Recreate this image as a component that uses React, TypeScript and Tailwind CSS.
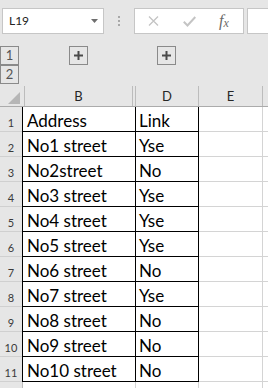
import React from "react";

const rows: [string, string][] = [
  ["Address", "Link"],
  ["No1 street", "Yse"],
  ["No2street", "No"],
  ["No3 street", "Yse"],
  ["No4 street", "Yse"],
  ["No5 street", "Yse"],
  ["No6 street", "No"],
  ["No7 street", "Yse"],
  ["No8 street", "No"],
  ["No9 street", "No"],
  ["No10 street", "No"],
];

const font = { fontFamily: "Lato, 'Liberation Sans', sans-serif" };

function PlusBtn() {
  return (
    <div className="w-[19px] h-[19px] border border-[#8a8a8a] flex items-center justify-center">
      <svg width="9" height="9" viewBox="0 0 9 9">
        <rect x="3.5" y="0" width="2" height="9" fill="#4a4a4a" />
        <rect x="0" y="3.5" width="9" height="2" fill="#4a4a4a" />
      </svg>
    </div>
  );
}

export default function App() {
  return (
    <div className="w-[268px] h-[388px] overflow-hidden bg-[#e6e6e6]" style={font}>
      {/* formula bar */}
      <div className="h-[46px] pt-2 pl-[2px] flex items-start">
        <div className="w-[102px] h-[26px] border border-[#c6c6c6] bg-white flex items-center justify-between pl-[6px] pr-[5px]">
          <span className="text-[12px] text-[#222] leading-none">L19</span>
          <svg width="7" height="4" viewBox="0 0 7 4">
            <polygon points="0,0 7,0 3.5,4" fill="#6e6e6e" />
          </svg>
        </div>
        <div className="w-[30px] h-[26px] flex flex-col items-center justify-center gap-[2px]">
          <div className="w-[2px] h-[2px] bg-[#a8a8a8]" />
          <div className="w-[2px] h-[2px] bg-[#a8a8a8]" />
          <div className="w-[2px] h-[2px] bg-[#a8a8a8]" />
        </div>
        <div className="w-[110px] h-[26px] border border-[#c6c6c6] bg-white flex items-center">
          <div className="w-[12px] ml-[12px] flex items-center justify-center">
            <svg width="11" height="10" viewBox="0 0 11 10">
              <path d="M1 0.5 L10 9.5 M10 0.5 L1 9.5" stroke="#c4c4c4" strokeWidth="1.3" fill="none" />
            </svg>
          </div>
          <div className="ml-[24px] flex items-center">
            <svg width="13" height="11" viewBox="0 0 13 11">
              <path d="M0.8 5.8 L4.5 9.5 L12.3 1" stroke="#c4c4c4" strokeWidth="2" fill="none" />
            </svg>
          </div>
          <div className="ml-[23px] flex items-end leading-none text-[#6a6a6a] italic" style={{ fontFamily: "'Liberation Serif', serif" }}>
            <span className="text-[16px]">f</span>
            <span className="text-[12px]">x</span>
          </div>
        </div>
        <div className="ml-[3px] flex-1 h-[26px] border-y border-l border-[#c6c6c6] bg-white" />
      </div>

      {/* outline controls */}
      <div className="h-[40px] flex items-start">
        <div className="flex flex-col">
          <div className="w-[19px] h-[19px] border border-[#8a8a8a] flex items-center justify-center text-[13px] text-[#555] leading-none">1</div>
          <div className="w-[19px] h-[19px] border border-[#8a8a8a] flex items-center justify-center text-[13px] text-[#555] leading-none">2</div>
        </div>
        <div className="ml-[50px]">
          <PlusBtn />
        </div>
        <div className="ml-[69px]">
          <PlusBtn />
        </div>
      </div>

      {/* column headers */}
      <div className="h-[21px] flex border-b border-[#ababab] text-[13px] text-[#262626] leading-none">
        <div className="w-[25px] border-r border-[#bcbcbc] flex items-end justify-end pr-[4px] pb-[2px]">
          <svg width="12" height="12" viewBox="0 0 12 12">
            <polygon points="12,0 12,12 0,12" fill="#b6b6b6" />
          </svg>
        </div>
        <div className="w-[108px] border-r border-[#bcbcbc] flex items-center justify-center">B</div>
        <div className="w-[3px] border-r border-[#bcbcbc]" />
        <div className="w-[63px] border-r border-[#bcbcbc] flex items-center justify-center">D</div>
        <div className="w-[64px] border-r border-[#bcbcbc] flex items-center justify-center">E</div>
        <div className="flex-1" />
      </div>

      {/* data rows */}
      {rows.map(([b, d], i) => (
        <div key={i} className="h-[25px] flex">
          <div className="w-[22px] border-b border-[#d0d0d0] flex items-end justify-center pb-[3px] text-[11px] leading-none text-[#3a3a3a]">
            {i + 1}
          </div>
          <div className="w-[114px] bg-white border-l border-r border-b border-black flex items-end pl-[4px] pb-[2px] text-[17px] leading-[17px] text-black">
            {b}
          </div>
          <div className="w-[63px] bg-white border-r border-b border-black flex items-end pl-[3px] pb-[2px] text-[17px] leading-[17px] text-black">
            {d}
          </div>
          <div className="w-[64px] bg-white border-r border-b border-[#d4d4d4]" />
          <div className="flex-1 bg-white border-b border-[#d4d4d4]" />
        </div>
      ))}
      <div className="h-[25px] flex">
        <div className="w-[22px] border-b border-[#d0d0d0]" />
        <div className="w-[114px] bg-white border-l border-[#bcbcbc] border-r-[#d4d4d4] border-r" />
        <div className="w-[63px] bg-white border-r border-[#d4d4d4]" />
        <div className="w-[64px] bg-white border-r border-[#d4d4d4]" />
        <div className="flex-1 bg-white" />
      </div>
    </div>
  );
}
